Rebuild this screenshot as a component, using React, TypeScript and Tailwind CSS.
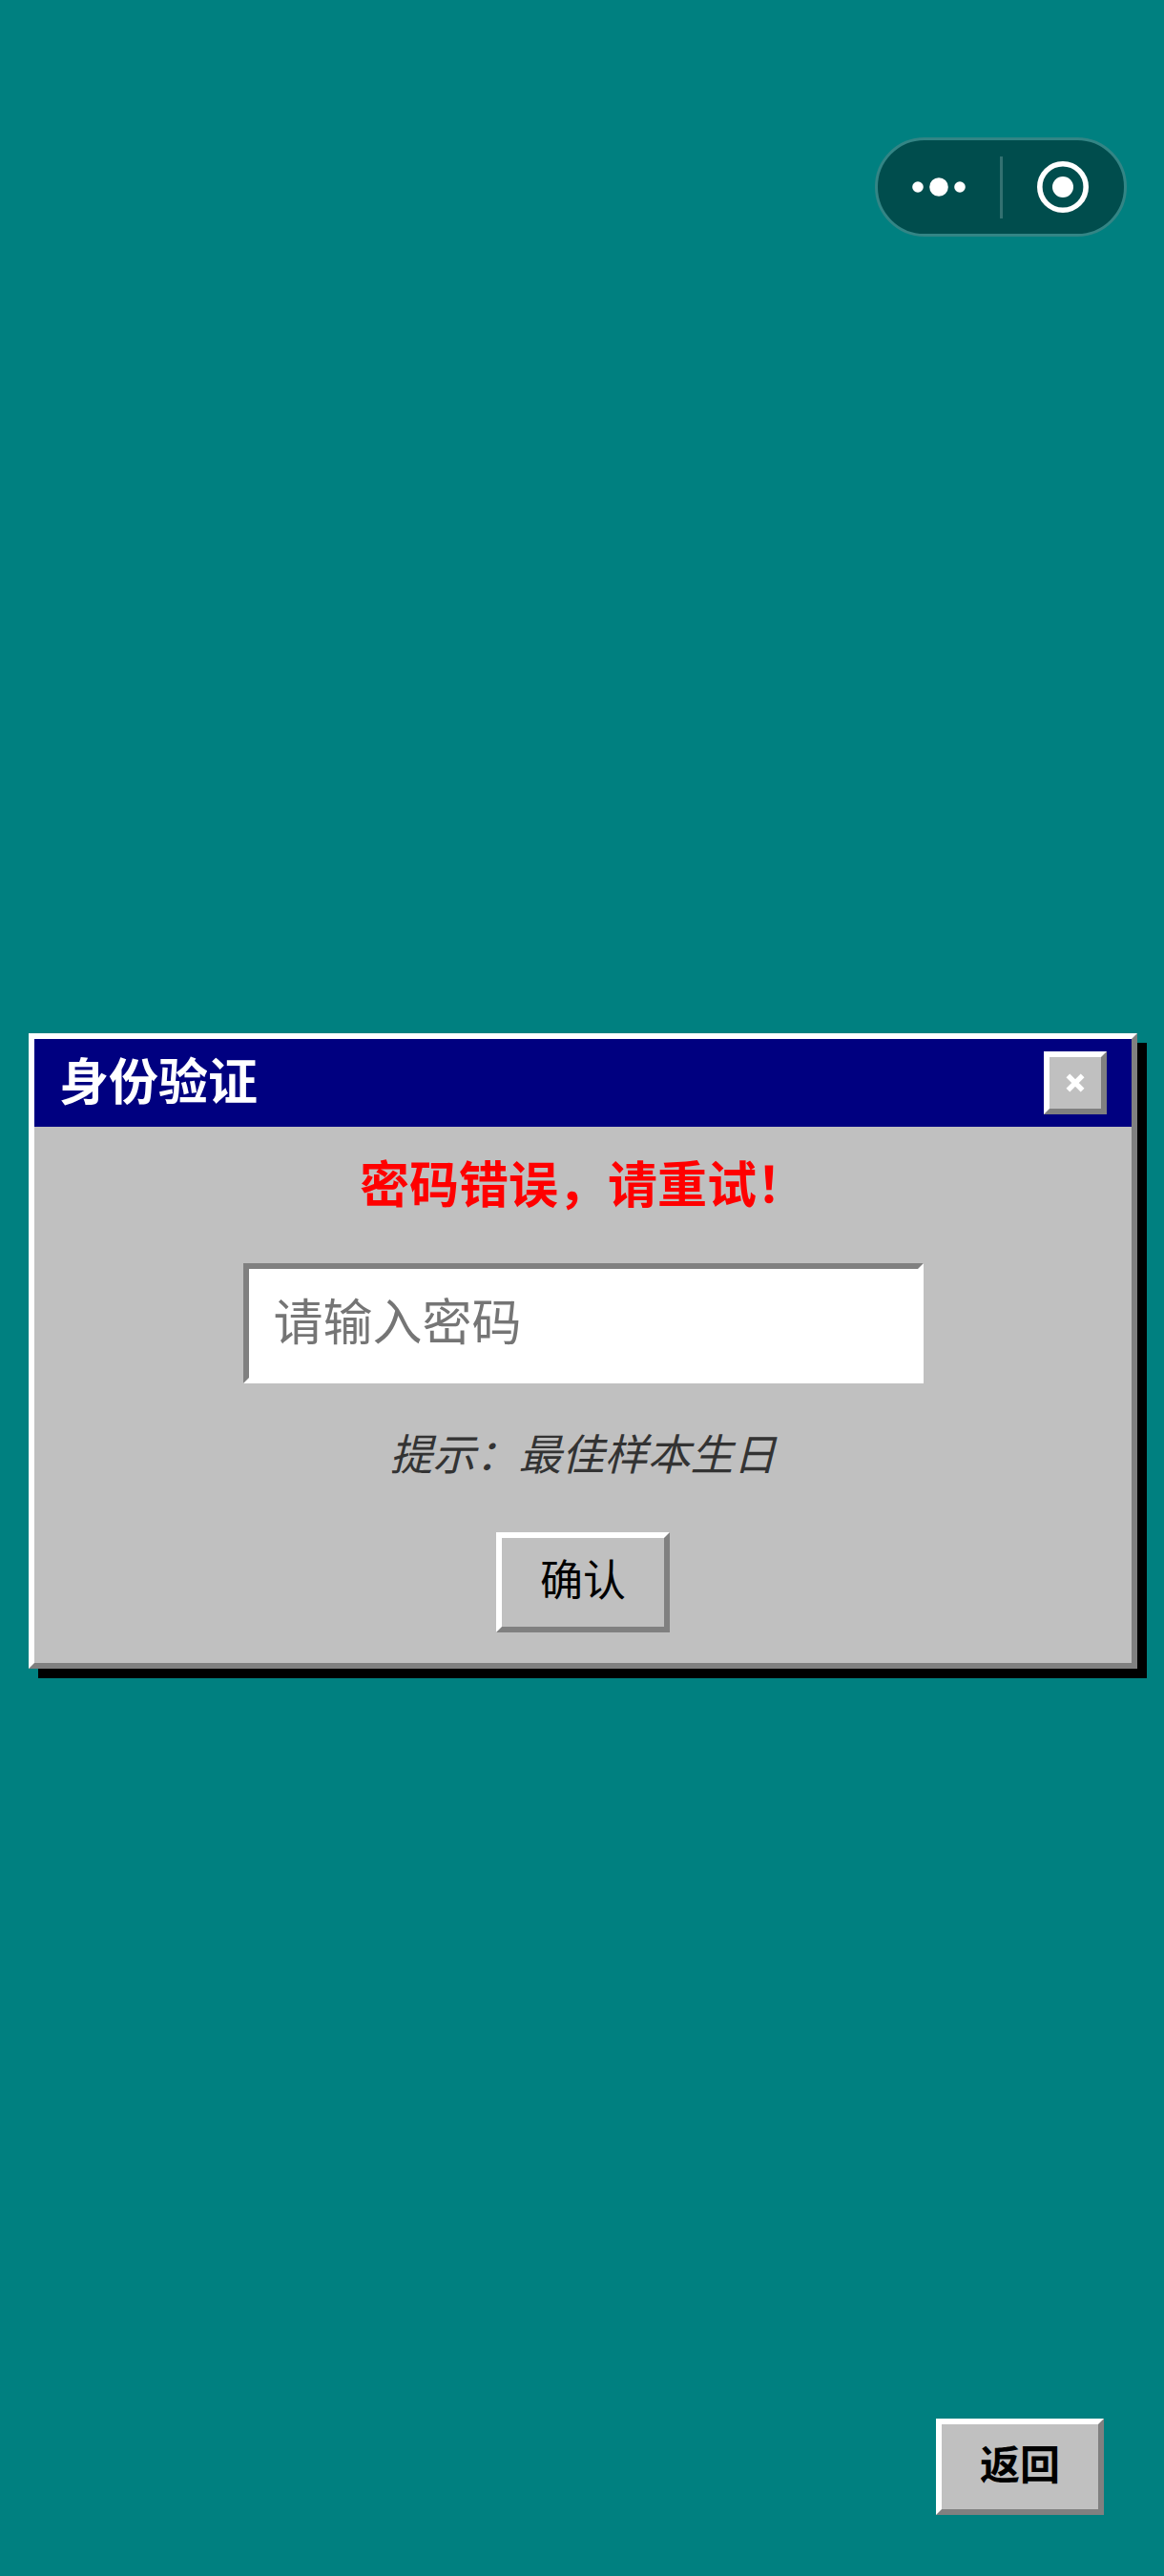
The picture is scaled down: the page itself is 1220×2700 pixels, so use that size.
import { useState } from "react";

const raised =
  "border-6 border-t-white border-l-white border-r-[#808080] border-b-[#808080] bg-[#c0c0c0]";

function Capsule() {
  return (
    <div className="flex h-[104px] w-[264px] items-center rounded-full border-3 border-[#338585] bg-[#004d4d]">
      <button type="button" aria-label="更多" className="flex flex-1 justify-center">
        <svg width="56" height="20" viewBox="0 0 56 20" fill="white" aria-hidden="true">
          <circle cx="6" cy="10" r="5.8" />
          <circle cx="28" cy="10" r="9.8" />
          <circle cx="50" cy="10" r="5.8" />
        </svg>
      </button>
      <span className="h-[65px] w-[3px] bg-[#337171]" />
      <button type="button" aria-label="关闭小程序" className="flex flex-1 justify-center">
        <svg width="54" height="54" viewBox="0 0 54 54" aria-hidden="true">
          <circle cx="27" cy="27" r="24.2" fill="none" stroke="white" strokeWidth="5.6" />
          <circle cx="27" cy="27" r="11" fill="white" />
        </svg>
      </button>
    </div>
  );
}

export default function App() {
  const [password, setPassword] = useState("");

  return (
    <div className="flex min-h-screen flex-col bg-[#008080] font-['Noto_Sans_CJK_SC',sans-serif]">
      <header className="flex justify-end pt-36 pr-[39px] pb-12">
        <Capsule />
      </header>

      <main className="flex flex-1 items-center pr-7 pl-[30px]">
        <section
          role="dialog"
          aria-labelledby="dialog-title"
          className={`w-full shadow-[10px_10px_0_#000] ${raised}`}
        >
          <div className="flex items-center justify-between bg-[#000080] px-[26px] py-[13px]">
            <h1 id="dialog-title" className="pb-2 text-[52px] leading-[58px] font-bold text-white">
              身份验证
            </h1>
            <button
              type="button"
              aria-label="关闭"
              className={`flex size-[66px] items-center justify-center ${raised}`}
            >
              <svg width="20" height="20" viewBox="0 0 20 20" stroke="white" strokeWidth="5.4" aria-hidden="true">
                <path d="M2.4 2.4 17.6 17.6M17.6 2.4 2.4 17.6" />
              </svg>
            </button>
          </div>

          <form
            className="flex flex-col items-center pt-7 pb-8"
            onSubmit={(event) => event.preventDefault()}
          >
            <p role="alert" className="text-[52px] leading-[60px] font-bold text-[#ff0000]">
              密码错误，请重试！
            </p>
            <input
              type="password"
              aria-label="密码"
              placeholder="请输入密码"
              value={password}
              onChange={(event) => setPassword(event.target.value)}
              className="mt-[55px] h-[126px] w-[62%] border-6 border-t-[#808080] border-r-white border-b-white border-l-[#808080] bg-white px-[26px] pb-2 text-[52px] leading-[60px] text-black outline-none placeholder:text-[#757575]"
            />
            <p className="mt-[45px] text-[45px] leading-[54px] text-[#333333] italic">
              提示：最佳样本生日
            </p>
            <button
              type="submit"
              className={`mt-[57px] px-10 pt-[15px] pb-6 text-[45px] leading-[54px] text-black ${raised}`}
            >
              确认
            </button>
          </form>
        </section>
      </main>

      <footer className="flex justify-end pr-[63px] pb-16">
        <button
          type="button"
          className={`px-10 pt-[14px] pb-[23px] text-[42px] leading-[52px] font-bold text-black ${raised}`}
        >
          返回
        </button>
      </footer>
    </div>
  );
}
